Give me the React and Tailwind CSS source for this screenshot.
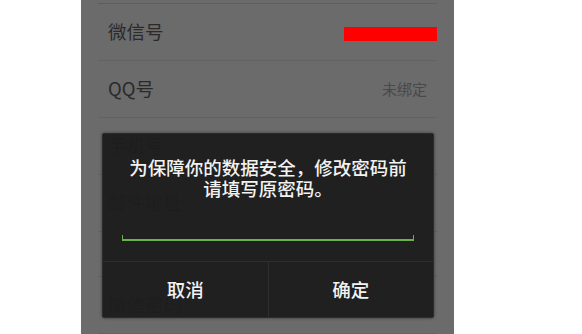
const rows = [
  { label: "微信号", value: null, h: "h-[57px]" },
  { label: "QQ号", value: "未绑定", h: "h-[57px]" },
  { label: "手机号", value: "", h: "h-[57px]" },
  { label: "邮件地址", value: "", h: "h-[57px]" },
  { label: "", value: "", h: "h-[45px]" },
  { label: "微信密码", value: "", h: "h-[57px]" },
];

const App = () => {
  return (
    <div className="flex w-[582px] h-[334px] bg-white font-['Noto_Sans_CJK_SC','Noto_Sans',sans-serif] overflow-hidden">
      <div className="relative ml-[81px] w-[373px] h-full bg-[#6b6b6b] overflow-hidden">
        <div className="mx-[17px]">
          <div className="h-[4px] border-b border-[#5e5e5e]" />
          {rows.map((row, i) => (
            <div
              key={i}
              className={`flex items-center justify-between ${row.h} border-b border-[#626262] pl-[10px]`}
            >
              <span className="text-[18.5px] text-[#2a2a2a]">{row.label}</span>
              {row.value === null ? (
                <div className="mt-[4px] w-[93px] h-[14px] bg-[#ff0000]" />
              ) : (
                <span className="pr-[10px] text-[15px] text-[#494949]">{row.value}</span>
              )}
            </div>
          ))}
        </div>

        {/* dialog */}
        <div className="absolute left-[21px] top-[133px] w-[332px] h-[185px] flex flex-col bg-[#1d1d1d]/[0.96] border border-[#2c2c2c] rounded-[2px] shadow-[0_0_3px_rgba(0,0,0,0.5)]">
          <p className="pt-[23px] text-center text-[18.5px] leading-[21px] font-medium text-[#f2f2f2]">
            为保障你的数据安全，修改密码前
            <br />
            请填写原密码。
          </p>
          <div className="mt-[36px] mx-[19px] h-[6px] border-x border-b-2 border-[#6cb347]" />
          <div className="mt-[20px] flex flex-1 border-t border-[#2e2e2e]">
            <div className="flex flex-1 items-center justify-center border-r border-[#2e2e2e] text-[18.5px] font-medium text-[#f2f2f2]">
              取消
            </div>
            <div className="flex flex-1 items-center justify-center text-[18.5px] font-medium text-[#f2f2f2]">
              确定
            </div>
          </div>
        </div>
      </div>
    </div>
  );
};

export default App;
